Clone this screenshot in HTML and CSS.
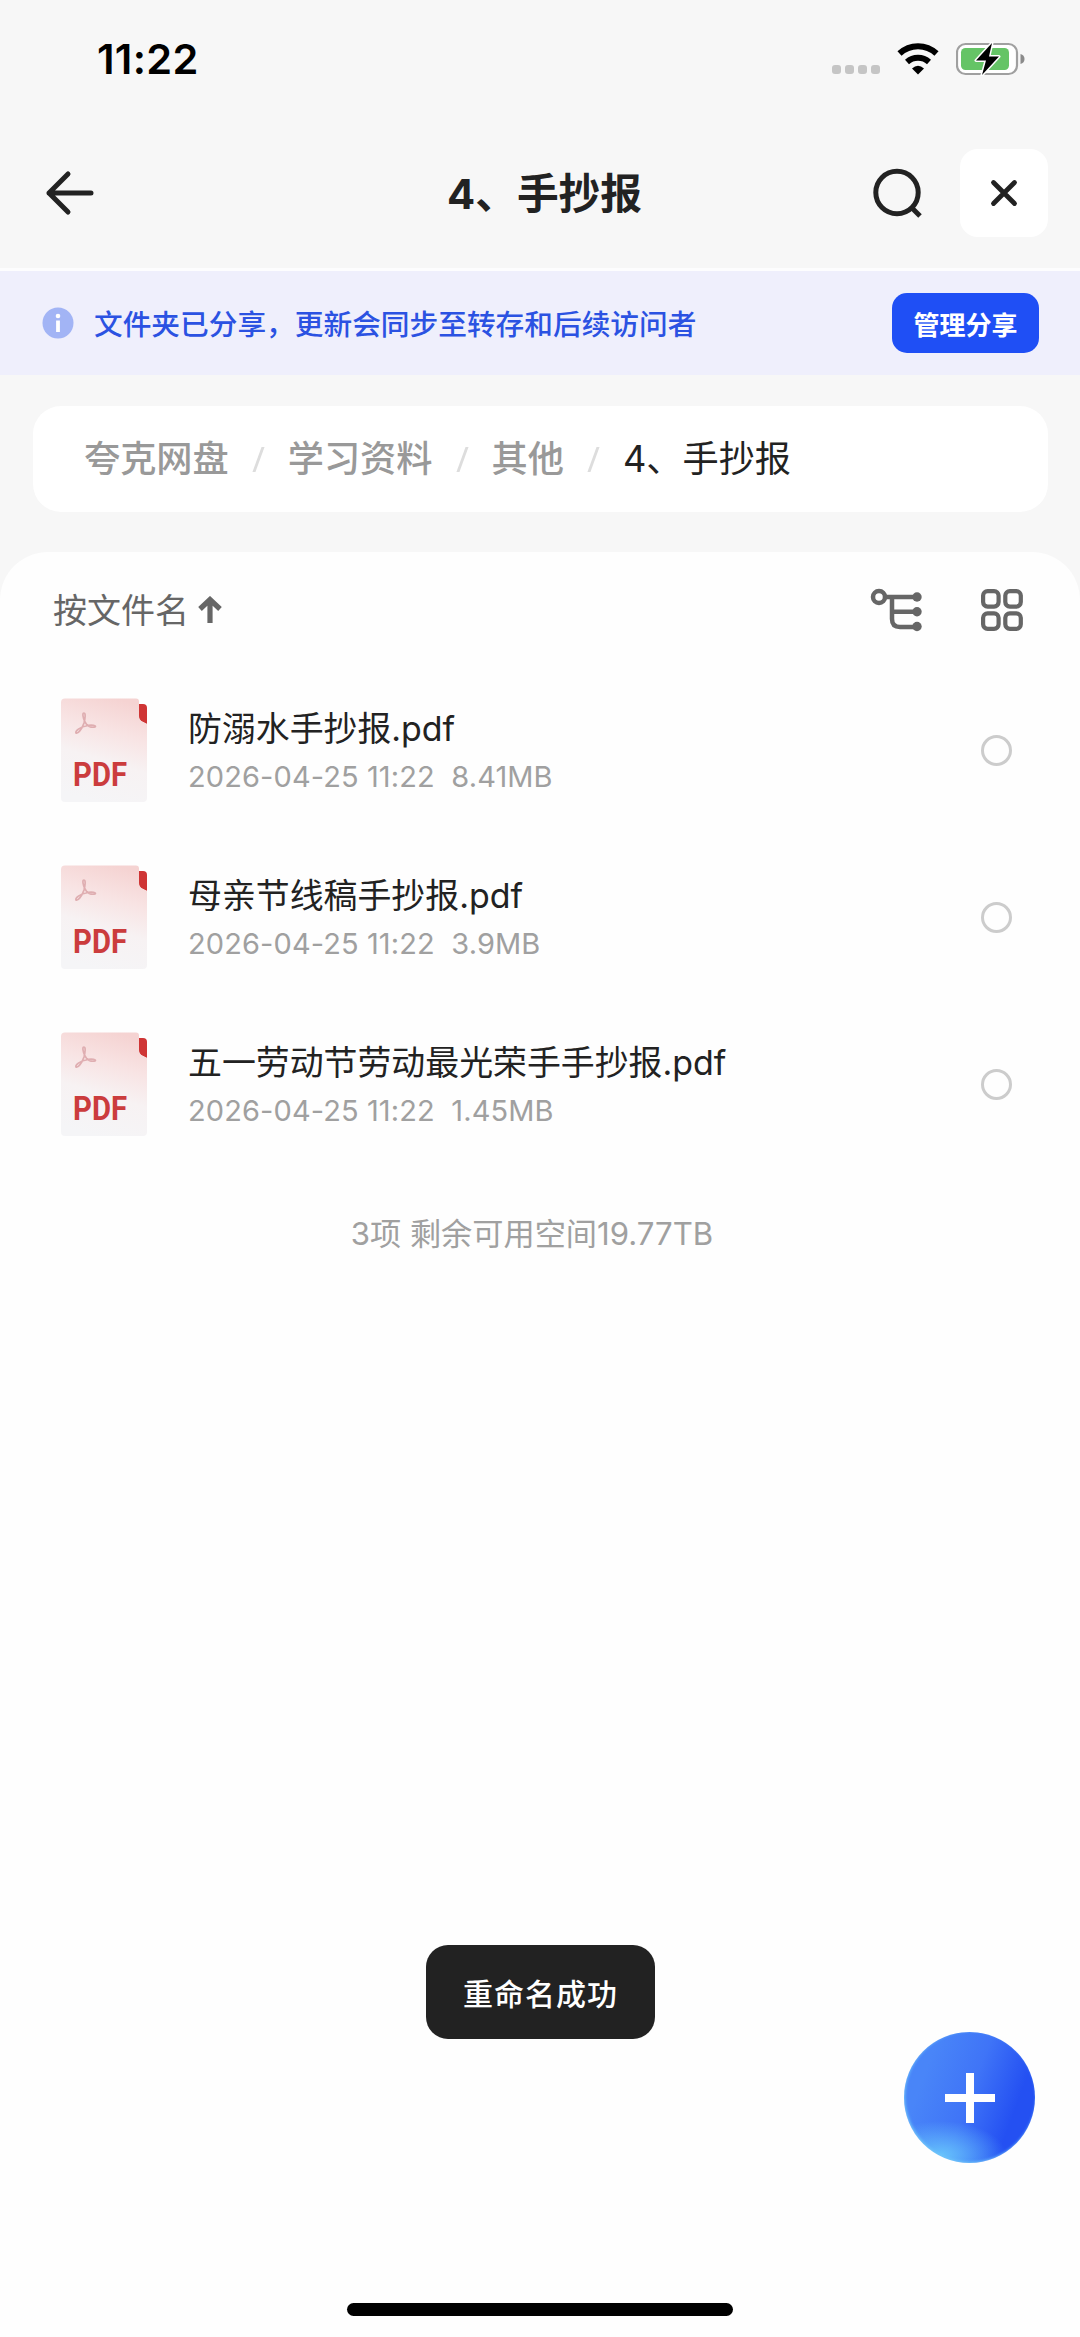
FILE: index.html
```html
<!DOCTYPE html>
<html lang="zh-CN">
<head>
<meta charset="utf-8">
<title>4、手抄报</title>
<link rel="stylesheet" href="styles.css">
</head>
<body>
<svg class="defs" width="0" height="0" aria-hidden="true">
  <defs>
    <linearGradient id="sheet" x1="0.65" y1="0" x2="0.4" y2="1">
      <stop offset="0" stop-color="#f5d3d2"/><stop offset=".3" stop-color="#f8e3e3"/><stop offset=".6" stop-color="#f7f2f3"/><stop offset="1" stop-color="#f5f5f7"/>
    </linearGradient>
    <symbol id="pdf" viewBox="0 0 88 106">
      <path d="M78 6h4a4 4 0 0 1 4 4v16l-6-3q-2-1-2-3z" fill="#cf3535"/>
      <path d="M4 .5h71q3 0 3 3V18q0 4 4 6l4 2v74q0 4-4 4H4q-4 0-4-4V4.500q0-4 4-4z" fill="url(#sheet)"/>
      <path d="M23 15c-2 0-1 5 1 9 2 4 6 6 10 5 2-1-3-3-9-1-6 1-11 5-10 7 2 1 6-4 8-10 1-4 2-10 0-10z" fill="none" stroke="#dfaeb1" stroke-width="1.700"/>
      <text x="12" y="87.500" class="pdf-word" textLength="54" lengthAdjust="spacingAndGlyphs">PDF</text>
    </symbol>
  </defs>
</svg>
<div class="screen">
  <header class="status">
    <span class="time">11:22</span>
    <span class="status-icons">
      <svg class="dots" width="48" height="9" viewBox="0 0 48 9" fill="#c5c5c5"><rect width="9" height="9" rx="3"/><rect x="13" width="9" height="9" rx="3"/><rect x="26" width="9" height="9" rx="3"/><rect x="39" width="9" height="9" rx="3"/></svg>
      <svg class="wifi" width="42" height="32" viewBox="0 0 42 32"><g fill="none" stroke="#000" stroke-width="6"><path d="M2.500 10.500a27 27 0 0 1 37 0"/><path d="M10 19a16.500 16.500 0 0 1 22 0"/></g><path d="M21 31.500l-6-6q6-5.500 12 0z"/></svg>
      <svg class="battery" width="69" height="34" viewBox="0 0 69 34"><rect x="1" y="2" width="60" height="30" rx="8.500" fill="#fff" stroke="#a0a0a0" stroke-width="2.200"/><rect x="5" y="6" width="48" height="22" rx="4.500" fill="#65c466"/><path d="M64.500 12q4 1 4 5t-4 5z" fill="#8a8a8a"/><path d="M36 1L20 18.500h10l-4 14.500 17-18.500H33z" fill="#000" stroke="#fff" stroke-width="3" paint-order="stroke" stroke-linejoin="round"/></svg>
    </span>
  </header>
  <nav class="nav">
    <svg class="back" width="50" height="46" viewBox="0 0 50 46"><path d="M46 23H4M23 4L4 23l19 19" fill="none" stroke="#222" stroke-width="5" stroke-linecap="round" stroke-linejoin="round"/></svg>
    <h1 class="title">4、手抄报</h1>
    <svg class="search" width="50" height="50" viewBox="0 0 50 50"><circle cx="24" cy="24.500" r="21.200" fill="none" stroke="#222" stroke-width="5"/><path d="M39 40l8 8" stroke="#222" stroke-width="5"/></svg>
    <button class="close"><svg width="28" height="28" viewBox="0 0 28 28"><path d="M3.500 3.500l21 21m0-21l-21 21" stroke="#222" stroke-width="4.800" stroke-linecap="round"/></svg></button>
  </nav>
  <section class="banner">
    <svg width="32" height="32" viewBox="0 0 32 32"><circle cx="16" cy="16" r="15.500" fill="#a2b4f5"/><circle cx="16" cy="9" r="2.300" fill="#fff"/><path d="M16 13.500V25" stroke="#fff" stroke-width="3.800"/></svg>
    <span class="banner-text">文件夹已分享，更新会同步至转存和后续访问者</span>
    <button class="manage">管理分享</button>
  </section>
  <section class="crumbs">
    <span>夸克网盘</span><i class="slash"></i><span>学习资料</span><i class="slash"></i><span>其他</span><i class="slash"></i><span class="current">4、手抄报</span>
  </section>
  <main class="panel">
    <div class="tools">
      <span class="sort">按文件名</span>
      <svg class="up" width="24" height="28" viewBox="0 0 24 28"><path d="M12 27V4M2 13L12 3.500 22 13" fill="none" stroke="#666" stroke-width="5.200"/></svg>
      <svg class="tree" width="52" height="44" viewBox="0 0 52 44" fill="none" stroke="#666" stroke-width="4.500"><circle cx="9" cy="9" r="6"/><path d="M15 9h30M22 9v22q0 8 8 8h15M22 23.700h23"/><g fill="#666" stroke="none"><circle cx="47" cy="9" r="4.700"/><circle cx="47" cy="23.700" r="4.700"/><circle cx="47" cy="38.500" r="4.700"/></g></svg>
      <svg class="grid" width="44" height="44" viewBox="0 0 44 44" fill="none" stroke="#666" stroke-width="4.200"><rect x="3.100" y="3.100" width="15.500" height="15.500" rx="4.500"/><rect x="25.300" y="3.100" width="15.500" height="15.500" rx="4.500"/><rect x="3.100" y="25.300" width="15.500" height="15.500" rx="4.500"/><rect x="25.300" y="25.300" width="15.500" height="15.500" rx="4.500"/></svg>
    </div>
    <ul class="files">
      <li class="file"><svg class="thumb"><use href="#pdf"/></svg><div class="info"><span class="name">防溺水手抄报.pdf</span><span class="meta">2026-04-25 11:22&nbsp; 8.41MB</span></div><span class="radio"></span></li>
      <li class="file"><svg class="thumb"><use href="#pdf"/></svg><div class="info"><span class="name">母亲节线稿手抄报.pdf</span><span class="meta">2026-04-25 11:22&nbsp; 3.9MB</span></div><span class="radio"></span></li>
      <li class="file"><svg class="thumb"><use href="#pdf"/></svg><div class="info"><span class="name">五一劳动节劳动最光荣手手抄报.pdf</span><span class="meta">2026-04-25 11:22&nbsp; 1.45MB</span></div><span class="radio"></span></li>
    </ul>
    <p class="summary">3项 剩余可用空间19.77TB</p>
  </main>
  <div class="toast">重命名成功</div>
  <button class="fab"><svg width="50" height="50" viewBox="0 0 50 50"><path d="M25 0v50M0 25h50" stroke="#fff" stroke-width="8"/></svg></button>
  <div class="home"></div>
</div>
</body>
</html>
```

FILE: styles.css
```css
* { box-sizing: border-box; }
body { margin: 0; background: #f7f7f7; font-family: Inter, "Noto Sans CJK SC", sans-serif; color: #222; }
button { border: 0; padding: 0; font: inherit; display: flex; align-items: center; justify-content: center; }
svg { display: block; flex: none; }
.defs { position: absolute; }
.screen { position: relative; width: 1080px; height: 2337px; overflow: hidden; display: flex; flex-direction: column; white-space: nowrap; }

.status { height: 118px; padding: 0 55px 0 97px; display: flex; align-items: center; justify-content: space-between; }
.time { font-size: 41.500px; line-height: 50px; font-weight: 600; color: #000; letter-spacing: 0.3px; }
.status-icons { display: flex; align-items: center; }
.dots { margin: 21px 17px 0 0; }
.wifi { margin-right: 17px; }

.nav { height: 150px; padding: 0 32px 0 45px; display: flex; align-items: center; }
.title { margin: 2px 0 0 352px; width: 420px; font-size: 41.700px; line-height: 60px; font-weight: 700; }
.search { margin-left: 6px; }
.close { width: 88px; height: 88px; margin-left: auto; border-radius: 18px; background: #fff; }

.banner { height: 107px; border-top: 3px solid #fdfdfe; background: #efeffc; padding: 0 41px 0 42px; display: flex; align-items: center; }
.banner-text { margin: 4px 0 0 20px; font-size: 28.700px; font-weight: 500; line-height: 40px; color: #2b52e2; }
.manage { width: 147px; height: 60px; margin-left: auto; border-radius: 15px; background: #1f4ff5; color: #fff; font-size: 26px; font-weight: 700; }

.crumbs { margin: 31px 32px 40px 33px; height: 106px; border-radius: 28px; background: #fff; padding-left: 51px; display: flex; align-items: center; font-size: 36.200px; line-height: 50px; color: #999; font-weight: 500; }
.slash { width: 3px; height: 25px; margin: 0 28px; background: #ddd; transform: skewX(-20deg); }
.current { color: #222; font-weight: 400; }

.panel { flex: 1; border-radius: 48px 48px 0 0; background: #fefefe; }
.tools { height: 115px; padding: 0 56px 0 53px; display: flex; align-items: center; }
.sort { padding-top: 3px; font-size: 34px; line-height: 48px; color: #666; }
.up { margin-left: 9px; }
.tree { margin-left: auto; }
.grid { margin-left: 58px; }
.files { list-style: none; margin: 0; padding: 0; }
.file { height: 167px; padding: 0 68px 0 61px; display: flex; align-items: center; }
.thumb { width: 88px; height: 106px; }
.pdf-word { font: 700 33px Roboto, sans-serif; fill: #cb3c3d; }
.info { margin-left: 39px; padding-top: 5px; display: flex; flex-direction: column; }
.name { font-size: 33.900px; line-height: 48px; }
.meta { font-size: 29px; line-height: 48px; letter-spacing: 0.1px; color: #a0a0a0; }
.radio { width: 31px; height: 31px; margin-left: auto; border: 3px solid #ccc; border-radius: 50%; }
.summary { margin: 41px 16px 0 0; text-align: center; font-size: 31.200px; line-height: 50px; color: #a0a0a0; }

.toast { position: absolute; left: 426px; top: 1945px; width: 229px; height: 94px; border-radius: 22px; background: #222; color: #fff; display: flex; align-items: center; justify-content: center; font-size: 30px; letter-spacing: 1px; font-weight: 500; }
.fab { position: absolute; left: 904px; top: 2032px; width: 131px; height: 131px; border-radius: 50%; background: radial-gradient(ellipse 50% 26% at 28% 94%, #66c2fc 0, #4b8bf800 100%), linear-gradient(110deg, #4985f8 20%, #3f74f7 50%, #2450f2 78%); box-shadow: inset 1px -1px 3px #6fc4fa; }
.home { position: absolute; left: 347px; top: 2303px; width: 386px; height: 13px; border-radius: 7px; background: #000; }
```
